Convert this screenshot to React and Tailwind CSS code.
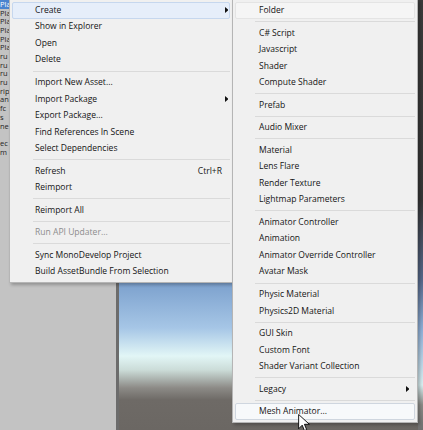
import React from "react";

const menu1 = [
  { t: "Create", arrow: true, hl: "create" },
  { t: "Show in Explorer" },
  { t: "Open" },
  { t: "Delete" },
  "sep",
  { t: "Import New Asset..." },
  { t: "Import Package", arrow: true },
  { t: "Export Package..." },
  { t: "Find References In Scene" },
  { t: "Select Dependencies" },
  "sep",
  { t: "Refresh", sc: "Ctrl+R" },
  { t: "Reimport" },
  "sep",
  { t: "Reimport All" },
  "sep",
  { t: "Run API Updater...", dis: true },
  "sep",
  { t: "Sync MonoDevelop Project" },
  { t: "Build AssetBundle From Selection" },
];

const menu2 = [
  { t: "Folder", hl: "folder" },
  "sep",
  { t: "C# Script" },
  { t: "Javascript" },
  { t: "Shader" },
  { t: "Compute Shader" },
  "sep",
  { t: "Prefab" },
  "sep",
  { t: "Audio Mixer" },
  "sep",
  { t: "Material" },
  { t: "Lens Flare" },
  { t: "Render Texture" },
  { t: "Lightmap Parameters" },
  "sep",
  { t: "Animator Controller" },
  { t: "Animation" },
  { t: "Animator Override Controller" },
  { t: "Avatar Mask" },
  "sep",
  { t: "Physic Material" },
  { t: "Physics2D Material" },
  "sep",
  { t: "GUI Skin" },
  { t: "Custom Font" },
  { t: "Shader Variant Collection" },
  "sep",
  { t: "Legacy", arrow: true },
  "sep",
  { t: "Mesh Animator...", hl: "mesh" },
];

const hlClasses = {
  none: "border-transparent",
  create: "border-[#c6d7ee] bg-[#e6eefa]",
  folder: "border-[#e4e4e4] bg-[#f5f5f5]",
  mesh: "border-[#cfd6df] bg-[#f7f9fb]",
};

function Arrow() {
  return (
    <svg width="3.5" height="6" viewBox="0 0 3.5 6">
      <path d="M0 0 L3.5 3 L0 6 Z" fill="#111" />
    </svg>
  );
}

function Menu({ items, className, pl, slot, sepMl }) {
  return (
    <div
      className={`absolute top-[-1px] border border-[#b5b5b5] bg-[#f0f0f0] p-[2px] shadow-[2px_2px_3px_rgba(0,0,0,0.25)] ${className}`}
    >
      {items.map((it, i) =>
        it === "sep" ? (
          <div key={i} className="flex h-[6.1px] items-center">
            <div className={`h-px flex-1 bg-[#dadada] ${sepMl}`} />
          </div>
        ) : (
          <div
            key={i}
            className={`flex h-[16.5px] items-center rounded-[2px] border ${pl} ${
              hlClasses[it.hl || "none"]
            } ${it.dis ? "text-[#8d8d8d]" : "text-[#141414]"}`}
          >
            <span className="flex-1 whitespace-nowrap">{it.t}</span>
            {it.sc && <span className="whitespace-nowrap">{it.sc}</span>}
            <span className={`flex justify-end ${slot}`}>{it.arrow && <Arrow />}</span>
          </div>
        )
      )}
    </div>
  );
}

const listRows = ["Pla", "Pla", "Pla", "Pla", "Pla", "Pla", "ru", "ru", "ru", "ru", "rip", "an", "fc", "s", "ne", "", "ec", "m"];

export default function App() {
  return (
    <div
      className="relative flex h-[430px] w-[423px] overflow-hidden text-[8.55px] leading-none"
      style={{ fontFamily: '"Segoe UI", "Open Sans", "Noto Sans", sans-serif' }}
    >
      <div className="w-[116px] bg-[#c3c3c3] text-[7.5px] leading-[7.5px] text-[#1e1e1e]">
        <div className="flex h-[9px] items-center overflow-hidden bg-[#4a84cf] text-white">{listRows[0]}</div>
        {listRows.slice(1).map((r, i) => (
          <div key={i} className="flex h-[8.7px] items-center overflow-hidden">
            {r}
          </div>
        ))}
      </div>
      <div className="w-[3px] bg-[#6c6c6c]" />
      <div className="flex-1 bg-[linear-gradient(to_bottom,#5d80b2_0px,#7ba0cd_282px,#a6c6e6_328px,#e2f6f6_356px,#cbdcd8_370px,#8c8a86_388px,#6e6a66_400px,#6b6763_430px)]" />
      <div className="w-[5px] bg-[linear-gradient(to_bottom,#3b3b3b_0px,#363636_200px,#55688a_280px,#8fb0d8_330px,#d8eef0_385px,#8a8a86_405px,#707070_430px)]" />

      <Menu items={menu1} className="left-[9px] w-[224px]" pl="pl-[22px]" slot="w-[7px] pr-[1px]" sepMl="ml-[21px]" />
      <Menu items={menu2} className="left-[232px] w-[186px]" pl="pl-[23px]" slot="w-[11px] pr-[5px]" sepMl="ml-[20px]" />

      <svg
        className="absolute left-[298px] top-[414px]"
        width="12"
        height="17"
        viewBox="0 0 13 19"
      >
        <path
          d="M0.5 0.5 L0.5 16.5 L4.5 12.5 L7 18.5 L9.5 17.5 L7 11.5 L12.5 11.5 Z"
          fill="#fff"
          stroke="#000"
          strokeWidth="1"
          strokeLinejoin="round"
        />
      </svg>
    </div>
  );
}
